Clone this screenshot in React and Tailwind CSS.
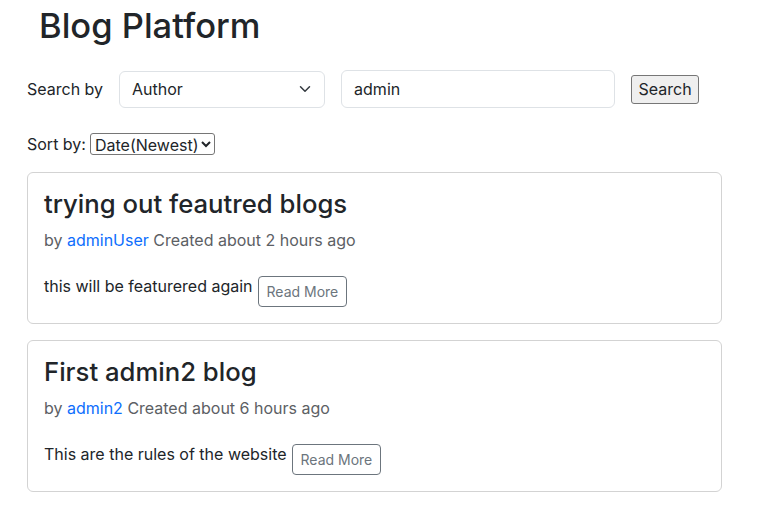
import { useState } from 'react';

const posts = [
  {
    id: 1,
    title: 'trying out feautred blogs',
    author: 'adminUser',
    created: 'about 2 hours ago',
    excerpt: 'this will be featurered again',
  },
  {
    id: 2,
    title: 'First admin2 blog',
    author: 'admin2',
    created: 'about 6 hours ago',
    excerpt: 'This are the rules of the website',
  },
];

const PostCard = ({ post }) => (
  <div className="w-[695px] mb-[16px] border border-[#d3d3d3] rounded-[6px] bg-white p-[16px]">
    <h3 className="text-[25.7px] leading-[1.2] font-medium text-[#212529] mb-[8px]">
      {post.title}
    </h3>
    <div className="text-[16px] leading-6 text-[#5c6064]">
      by <a href="#" className="text-[#0d6efd]">{post.author}</a> Created {post.created}
    </div>
    <div className="flex items-start mt-[22px]">
      <p className="text-[16px] leading-6 text-[#212529]">{post.excerpt}</p>
      <button className="ml-[5px] mt-[2px] h-[31px] px-[8px] border border-[#6c757d] rounded-[4px] text-[14px] leading-[21px] text-[#6c757d]">
        Read More
      </button>
    </div>
  </div>
);

export default function App() {
  const [query, setQuery] = useState('admin');
  const [sort, setSort] = useState('newest');

  return (
    <div className="min-h-screen bg-white text-[#212529] font-['Inter',sans-serif] text-[16px]">
      <div className="pl-[27px] pt-[5px]">
        {/* Header */}
        <h1 className="pl-[12px] text-[34.5px] leading-[1.2] font-medium">Blog Platform</h1>

        {/* Search */}
        <div className="flex items-center mt-[24px] h-[38px]">
          <span className="leading-6">Search by</span>
          <div className="ml-[16px] w-[206px] h-[37px] flex items-center justify-between pl-[12px] pr-[13px] border border-[#dee2e6] rounded-[6px]">
            <span>Author</span>
            <svg width="12" height="12" viewBox="0 0 16 16" fill="none">
              <path d="m2 5 6 6 6-6" stroke="#343a40" strokeWidth="2" strokeLinecap="round" strokeLinejoin="round" />
            </svg>
          </div>
          <input
            value={query}
            onChange={(e) => setQuery(e.target.value)}
            className="ml-[16px] w-[274px] h-[38px] px-[12px] border border-[#dee2e6] rounded-[6px] outline-none"
          />
          <button className="ml-[16px] w-[68px] h-[29px] px-[6px] bg-[#efefef] border border-[#767676] rounded-[3px]">
            Search
          </button>
        </div>

        {/* Sort */}
        <div className="flex items-center mt-[25px] h-[22px]">
          <span>Sort by:</span>
          <select
            value={sort}
            onChange={(e) => setSort(e.target.value)}
            className="ml-[4px] w-[125px] h-[22px] border border-[#767676] rounded-[3px] bg-white"
          >
            <option value="newest">Date(Newest)</option>
            <option value="oldest">Date(Oldest)</option>
          </select>
        </div>

        {/* Posts */}
        <div className="mt-[17px]">
          {posts.map((post) => (
            <PostCard key={post.id} post={post} />
          ))}
        </div>
      </div>
    </div>
  );
}
